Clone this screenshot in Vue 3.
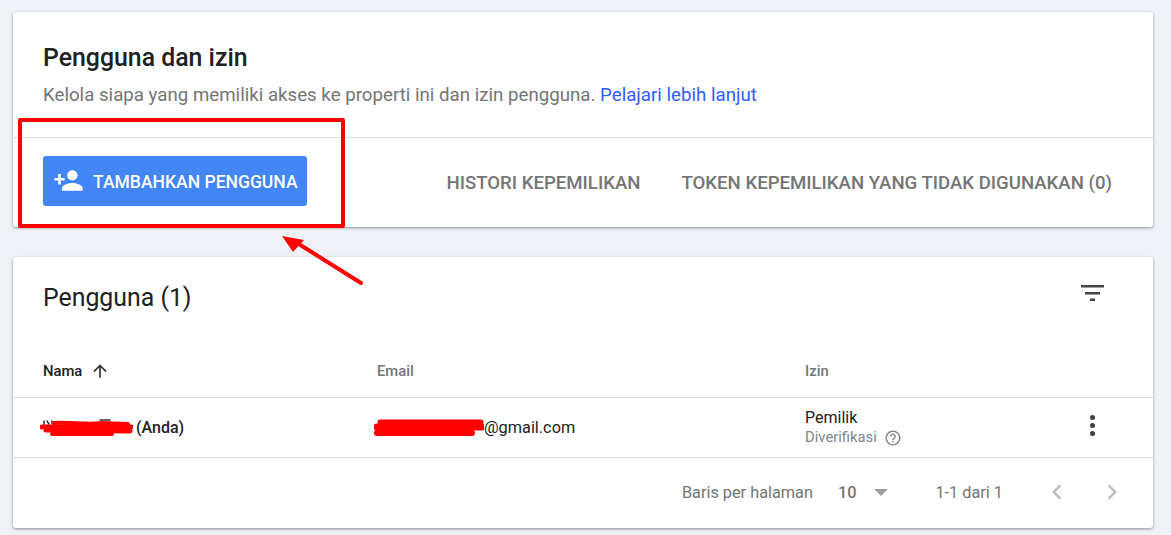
<template>
  <div class="page">
    <section class="card top">
      <div class="intro">
        <h1>Pengguna dan izin</h1>
        <p>Kelola siapa yang memiliki akses ke properti ini dan izin pengguna. <a>Pelajari lebih lanjut</a></p>
      </div>
      <div class="actions">
        <button class="add">
          <svg viewBox="0 0 24 24" width="31" height="31" fill="#fff">
            <path d="M15 12c2.21 0 4-1.79 4-4s-1.79-4-4-4-4 1.79-4 4 1.79 4 4 4zm-9-2V7H4v3H1v2h3v3h2v-3h3v-2H6zm9 4c-2.67 0-8 1.34-8 4v2h16v-2c0-2.66-5.33-4-8-4z" />
          </svg>
          <span>TAMBAHKAN PENGGUNA</span>
        </button>
        <div class="links">
          <span>HISTORI KEPEMILIKAN</span>
          <span>TOKEN KEPEMILIKAN YANG TIDAK DIGUNAKAN (0)</span>
        </div>
      </div>
    </section>

    <section class="card users">
      <div class="users-head">
        <h2>Pengguna (1)</h2>
        <svg class="filter" viewBox="0 0 24 24" width="30" height="30" fill="#444">
          <path d="M3.2 6.4h18.4v2H3.2zM6.4 12h12v2h-12zM10.4 17.2h4v2h-4z" />
        </svg>
      </div>
      <div class="row head">
        <div class="sort">
          Nama
          <svg viewBox="0 0 24 24" width="20" height="20" fill="#333">
            <path d="M4 12l1.41 1.41L11 7.83V20h2V7.83l5.58 5.59L20 12l-8-8-8 8z" />
          </svg>
        </div>
        <div>Email</div>
        <div>Izin</div>
      </div>
      <div class="row body">
        <div class="name">
          <span class="redact" style="width: 93px">
            <svg viewBox="0 0 93 18" width="93" height="18" fill="none" stroke="#f00" stroke-linecap="round">
              <path stroke="#333" stroke-width="1.5" d="M4 2 L4 6 M7 2 L9 5 M12 2 L12 5 M60 1 L70 1" />
              <path stroke-width="4" d="M14 4 C30 3 48 6 62 4 L88 5" />
              <path stroke-width="5" d="M2 8 L91 8" />
              <path stroke-width="5" d="M6 11 L90 12" />
              <path stroke-width="4" d="M12 15 L72 15" />
            </svg>
          </span>
          (Anda)
        </div>
        <div class="email">
          <span class="redact" style="width: 110px">
            <svg viewBox="0 0 110 18" width="110" height="18" fill="none" stroke="#f00" stroke-linecap="round">
              <path stroke-width="5" d="M6 3 L107 3" />
              <path stroke-width="7" d="M3 8 L108 8" />
              <path stroke-width="6" d="M3 14 L98 14" />
            </svg>
          </span>@gmail.com
        </div>
        <div class="perm">
          <div class="owner">Pemilik</div>
          <div class="verified">
            Diverifikasi
            <svg viewBox="0 0 24 24" width="18" height="18" fill="#8a8a8a">
              <path d="M11 18h2v-2h-2v2zm1-16C6.48 2 2 6.48 2 12s4.48 10 10 10 10-4.48 10-10S17.52 2 12 2zm0 18c-4.41 0-8-3.59-8-8s3.59-8 8-8 8 3.59 8 8-3.59 8-8 8zm0-14c-2.21 0-4 1.79-4 4h2c0-1.1.9-2 2-2s2 .9 2 2c0 2-3 1.75-3 5h2c0-2.25 3-2.5 3-5 0-2.21-1.79-4-4-4z" />
            </svg>
          </div>
        </div>
        <div class="more"><i></i><i></i><i></i></div>
      </div>
      <div class="pager">
        <span>Baris per halaman</span>
        <b>10</b>
        <span class="caret"></span>
        <span class="range">1-1 dari 1</span>
        <svg viewBox="0 0 24 24" width="30" height="30" fill="#bdbdbd">
          <path d="M15.41 7.41L14 6l-6 6 6 6 1.41-1.41L10.83 12z" />
        </svg>
        <svg viewBox="0 0 24 24" width="30" height="30" fill="#bdbdbd">
          <path d="M10 6L8.59 7.41 13.17 12l-4.58 4.59L10 18l6-6z" />
        </svg>
      </div>
    </section>

    <div class="mark"></div>
    <svg class="arrow" viewBox="0 0 90 60" width="90" height="60">
      <path d="M81 50 L14 8" stroke="#f00" stroke-width="4" stroke-linecap="round" />
      <path d="M2 3 L24 7 L13 19 Z" fill="#f00" />
    </svg>
  </div>
</template>

<script setup>
</script>

<style>
html, body {
  background: #eef2f7;
}
</style>

<style scoped>
.page {
  position: relative;
  box-sizing: border-box;
  height: 535px;
  overflow: hidden;
  padding: 12px 18px 0 13px;
  font-family: Roboto, "Liberation Sans", sans-serif;
  color: #202124;
}
.card {
  background: #fff;
  border-radius: 3px;
  box-shadow: 0 1px 3px rgba(60, 64, 67, 0.55);
}
.top {
  height: 215px;
  margin-bottom: 30px;
}
.intro {
  box-sizing: border-box;
  height: 126px;
  padding: 31px 30px 0;
  border-bottom: 1px solid #dadce0;
}
h1 {
  margin: 0;
  font-size: 24.85px;
  line-height: 30px;
  font-weight: 500;
}
p {
  margin: 10px 0 0;
  font-size: 18.7px;
  line-height: 24px;
  color: #757575;
}
a {
  color: #2f5dff;
}
.actions {
  display: flex;
  align-items: center;
  justify-content: space-between;
  height: 89px;
  padding: 0 41px 0 30px;
  margin-top: -1px;
}
.add {
  display: flex;
  align-items: center;
  gap: 9px;
  width: 264px;
  height: 50px;
  margin-top: -2px;
  padding: 0 0 0 10px;
  border: 0;
  border-radius: 3px;
  background: #4285f4;
  color: #fff;
  font: 500 17.55px Roboto, "Liberation Sans", sans-serif;
  white-space: nowrap;
}
.add span {
  margin-top: 2px;
}
.links {
  display: flex;
  gap: 41px;
  margin-top: 2px;
  font-size: 18.6px;
  font-weight: 500;
  color: #757575;
}
.users {
  height: 271px;
  display: flex;
  flex-direction: column;
}
.users-head {
  display: flex;
  justify-content: space-between;
  height: 71px;
  padding: 0 46px 0 30px;
}
h2 {
  margin: 26px 0 0;
  font-size: 24.85px;
  line-height: 30px;
  font-weight: 400;
}
.filter {
  margin-top: 20px;
}
.row {
  display: grid;
  grid-template-columns: 334px 428px 1fr 60px;
  padding-left: 30px;
  align-items: center;
  border-bottom: 1px solid #dadce0;
}
.head {
  height: 70px;
  padding-top: 17px;
  box-sizing: border-box;
  font-size: 14.8px;
  font-weight: 500;
  color: #757575;
}
.sort {
  display: flex;
  align-items: center;
  gap: 8px;
  color: #202124;
}
.body {
  height: 60px;
  box-sizing: border-box;
  font-size: 16.3px;
}
.name {
  font-weight: 500;
  font-size: 16px;
  display: flex;
  align-items: center;
}
.email {
  display: flex;
  align-items: center;
}
.redact {
  display: inline-block;
  flex: none;
  height: 18px;
  margin-left: -3px;
}
.name .redact {
  margin-right: 3px;
}
.perm {
  font-size: 16px;
  line-height: 19px;
  color: #202124;
}
.owner {
  margin-bottom: 1px;
}
.verified {
  display: flex;
  align-items: center;
  gap: 7px;
  font-size: 14.8px;
  color: #80868b;
}
.more {
  display: flex;
  flex-direction: column;
  align-items: center;
  gap: 3px;
  margin: 0 0 4px -9px;
  width: 16px;
}
.more i {
  width: 5px;
  height: 5px;
  border-radius: 50%;
  background: #3c4043;
}
.pager {
  display: flex;
  align-items: center;
  justify-content: flex-end;
  flex: 1;
  padding: 0 26px 2px 0;
  font-size: 16.3px;
  color: #757575;
}
.pager b {
  margin-left: 25px;
  font-weight: 500;
}
.caret {
  margin: 0 0 0 18px;
  border: 7px solid transparent;
  border-top-color: #9e9e9e;
  border-bottom: 0;
}
.range {
  margin: 0 39px 0 47px;
}
.pager svg + svg {
  margin-left: 25px;
}
.mark {
  position: absolute;
  left: 18px;
  top: 118px;
  width: 327px;
  height: 110px;
  box-sizing: border-box;
  border: 4px solid #f00;
  border-radius: 2px;
}
.arrow {
  position: absolute;
  left: 280px;
  top: 233px;
}
</style>
